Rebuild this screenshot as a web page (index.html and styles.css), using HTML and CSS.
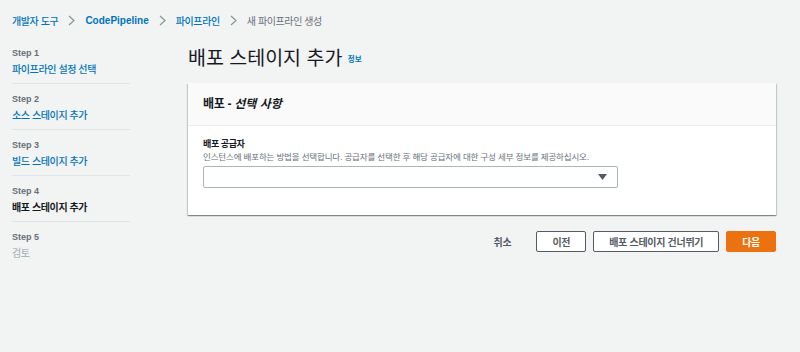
FILE: index.html
```html
<!DOCTYPE html>
<html lang="ko">
<head>
    <meta charset="UTF-8">
    <meta name="viewport" content="width=device-width, initial-scale=1.0">
    <title>새 파이프라인 생성</title>
    <link rel="stylesheet" href="styles.css">
</head>
<body>
    <nav class="crumbs">
        <a href="#">개발자 도구</a>
        <svg class="chev" width="7" height="11" viewBox="0 0 7 11"><polyline points="1,1 6,5.5 1,10"/></svg>
        <a href="#" class="latin">CodePipeline</a>
        <svg class="chev" width="7" height="11" viewBox="0 0 7 11"><polyline points="1,1 6,5.5 1,10"/></svg>
        <a href="#">파이프라인</a>
        <svg class="chev" width="7" height="11" viewBox="0 0 7 11"><polyline points="1,1 6,5.5 1,10"/></svg>
        <span class="current">새 파이프라인 생성</span>
    </nav>

    <div class="layout">
        <ul class="steps">
            <li class="step">
                <div class="step-num">Step 1</div>
                <a href="#" class="step-name">파이프라인 설정 선택</a>
            </li>
            <li class="step">
                <div class="step-num">Step 2</div>
                <a href="#" class="step-name">소스 스테이지 추가</a>
            </li>
            <li class="step">
                <div class="step-num">Step 3</div>
                <a href="#" class="step-name">빌드 스테이지 추가</a>
            </li>
            <li class="step">
                <div class="step-num">Step 4</div>
                <span class="step-name active">배포 스테이지 추가</span>
            </li>
            <li class="step last">
                <div class="step-num">Step 5</div>
                <span class="step-name disabled">검토</span>
            </li>
        </ul>

        <main class="main">
            <h1 class="title">배포 스테이지 추가 <a href="#" class="info">정보</a></h1>

            <div class="card">
                <div class="card-head">배포 - <em>선택 사항</em></div>
                <div class="card-body">
                    <label class="field-label" for="provider">배포 공급자</label>
                    <div class="field-desc">인스턴스에 배포하는 방법을 선택합니다. 공급자를 선택한 후 해당 공급자에 대한 구성 세부 정보를 제공하십시오.</div>
                    <div class="select" id="provider">
                        <svg width="9" height="6" viewBox="0 0 9 6"><polygon points="0,0 9,0 4.5,6"/></svg>
                    </div>
                </div>
            </div>

            <div class="actions">
                <button class="btn link">취소</button>
                <button class="btn">이전</button>
                <button class="btn">배포 스테이지 건너뛰기</button>
                <button class="btn primary">다음</button>
            </div>
        </main>
    </div>
</body>
</html>
```

FILE: styles.css
```css
body {
    margin: 0;
    padding: 12px 24px 0 12px;
    background-color: #f2f3f3;
    font-family: "Liberation Sans", "Noto Sans CJK KR", sans-serif;
    color: #16191f;
}
a {
    color: #0073bb;
    text-decoration: none;
}
.crumbs {
    display: flex;
    align-items: center;
    height: 16px;
    font-size: 10px;
    letter-spacing: -0.4px;
    font-weight: 500;
}
.crumbs .latin {
    letter-spacing: 0;
    font-weight: bold;
}
.crumbs .current {
    color: #687078;
    font-weight: normal;
}
.chev {
    margin: 0 10px;
}
.chev polyline {
    fill: none;
    stroke: #879596;
    stroke-width: 1.2;
}
.layout {
    display: flex;
    margin-top: 18px;
}
.steps {
    list-style: none;
    margin: 0;
    padding: 0;
    width: 118px;
    flex-shrink: 0;
    margin-right: 58px;
}
.step {
    padding: 8px 0 5px;
    border-bottom: 1px solid #e1e4e4;
}
.step:first-child {
    padding-top: 0;
}
.step.last {
    border-bottom: none;
}
.step-num {
    font-size: 9px;
    line-height: 14px;
    font-weight: bold;
    color: #687078;
    margin-bottom: 2px;
}
.step-name {
    display: block;
    font-size: 10px;
    line-height: 16px;
    letter-spacing: -0.4px;
    font-weight: 500;
}
.step-name.active {
    font-weight: bold;
    color: #16191f;
}
.step-name.disabled {
    color: #aab7b8;
}
.main {
    flex: 1;
}
.title {
    margin: 0 0 11px;
    font-size: 19.5px;
    line-height: 24px;
    font-weight: normal;
}
.info {
    font-size: 7.5px;
    font-weight: bold;
    vertical-align: middle;
}
.card {
    background: white;
    box-shadow: 0 1px 1px 0 rgba(0,28,36,0.3), 1px 1px 1px 0 rgba(0,28,36,0.15), -1px 1px 1px 0 rgba(0,28,36,0.15);
}
.card-head {
    height: 42px;
    line-height: 42px;
    padding: 0 15px;
    background: #fafafa;
    border-bottom: 1px solid #eaeded;
    font-size: 12px;
    font-weight: bold;
    letter-spacing: -0.3px;
}
.card-head em {
    letter-spacing: 0;
}
.card-body {
    padding: 12px 15px 27px;
}
.field-label {
    display: block;
    font-size: 9px;
    line-height: 12px;
    font-weight: bold;
    letter-spacing: -0.4px;
}
.field-desc {
    font-size: 8.5px;
    line-height: 14px;
    letter-spacing: -0.15px;
    color: #687078;
}
.select {
    margin-top: 2px;
    width: 403px;
    height: 20px;
    padding-right: 10px;
    border: 1px solid #aab7b8;
    border-radius: 2px;
    display: flex;
    align-items: center;
    justify-content: flex-end;
}
.select polygon {
    fill: #545b64;
}
.actions {
    display: flex;
    justify-content: flex-end;
    gap: 7px;
    margin-top: 16px;
}
.btn {
    height: 21px;
    padding: 0 15px;
    border: 1px solid #545b64;
    border-radius: 2px;
    background: white;
    font-family: inherit;
    font-size: 10px;
    letter-spacing: -0.3px;
    font-weight: bold;
    color: #545b64;
    cursor: pointer;
}
.btn.link {
    border-color: transparent;
    background: none;
    padding: 0 17px;
}
.btn.primary {
    background: #ec7211;
    border-color: #ec7211;
    color: white;
}
```
